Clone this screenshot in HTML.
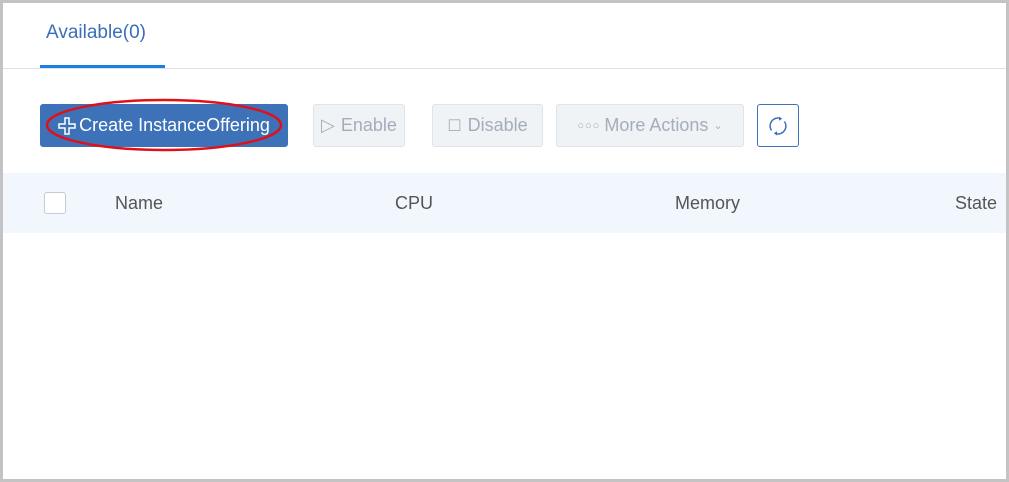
<!DOCTYPE html>
<html><head><style>
*{margin:0;padding:0;box-sizing:border-box}
body{width:1009px;height:482px;background:#fff;font-family:"Liberation Sans",sans-serif;position:relative;overflow:hidden}
.frame{position:absolute;left:0;top:0;width:1009px;height:482px;border:3px solid #c3c3c3}
.abs{position:absolute}
.tab{left:46px;top:22px;font-size:19px;color:#3a6fb8}
.ul{left:40px;top:65px;width:125px;height:3px;background:#1d7fe0}
.sep{left:3px;top:68px;width:1003px;height:1px;background:#dde3ea}
.btn{position:absolute;top:104px;height:43px;border-radius:3px;font-size:18px;display:flex;align-items:center;justify-content:center}
.dis{background:#f0f3f6;border:1px solid #dfe4ea;color:#a3adbb}
.hdr{left:3px;top:173px;width:1003px;height:60px;background:#f1f7fd}
.th{position:absolute;top:193px;font-size:18px;color:#555}
</style></head><body>
<div class="abs tab">Available(0)</div>
<div class="abs ul"></div>
<div class="abs sep"></div>
<div class="btn" style="left:40px;width:248px;background:#3d72b9;color:#fff"><svg width="18" height="18" viewBox="0 0 18 18" style="margin-right:3px"><path d="M7 1h4v6h6v4h-6v6h-4v-6h-6v-4h6z" fill="none" stroke="#fff" stroke-width="1.5"/></svg>Create InstanceOffering</div>
<svg class="abs" style="left:44px;top:97px" width="242" height="58"><ellipse cx="120" cy="28" rx="117" ry="25" fill="none" stroke="#e0101a" stroke-width="2.5"/></svg>
<div class="btn dis" style="left:313px;width:92px"><span style="margin-right:6px">▷</span>Enable</div>
<div class="btn dis" style="left:432px;width:111px"><span style="margin-right:6px;font-size:16px">☐</span>Disable</div>
<div class="btn dis" style="left:556px;width:188px"><span style="font-size:11px;letter-spacing:1px;margin-right:4px">○○○</span>More Actions <span style="font-size:11px;margin-left:5px">⌄</span></div>
<div class="btn" style="left:757px;width:42px;border:1px solid #3d72b9;background:#fff">
<svg width="24" height="24" viewBox="0 0 24 24"><path d="M5.5 16.5A8 8 0 0 1 14 4.2M18.5 7.5A8 8 0 0 1 10 19.8" fill="none" stroke="#3d72b9" stroke-width="1.5"/><path d="M13 2.5l3.2 2.2-3.2 2z M11 21.5l-3.2-2.2 3.2-2z" fill="#3d72b9"/></svg></div>
<div class="abs hdr"></div>
<div class="abs" style="left:44px;top:192px;width:22px;height:22px;border:1px solid #c4cbd4;border-radius:3px;background:#fff"></div>
<div class="th" style="left:115px">Name</div>
<div class="th" style="left:395px">CPU</div>
<div class="th" style="left:675px">Memory</div>
<div class="th" style="left:955px">State</div>
<div class="frame"></div>
</body></html>
